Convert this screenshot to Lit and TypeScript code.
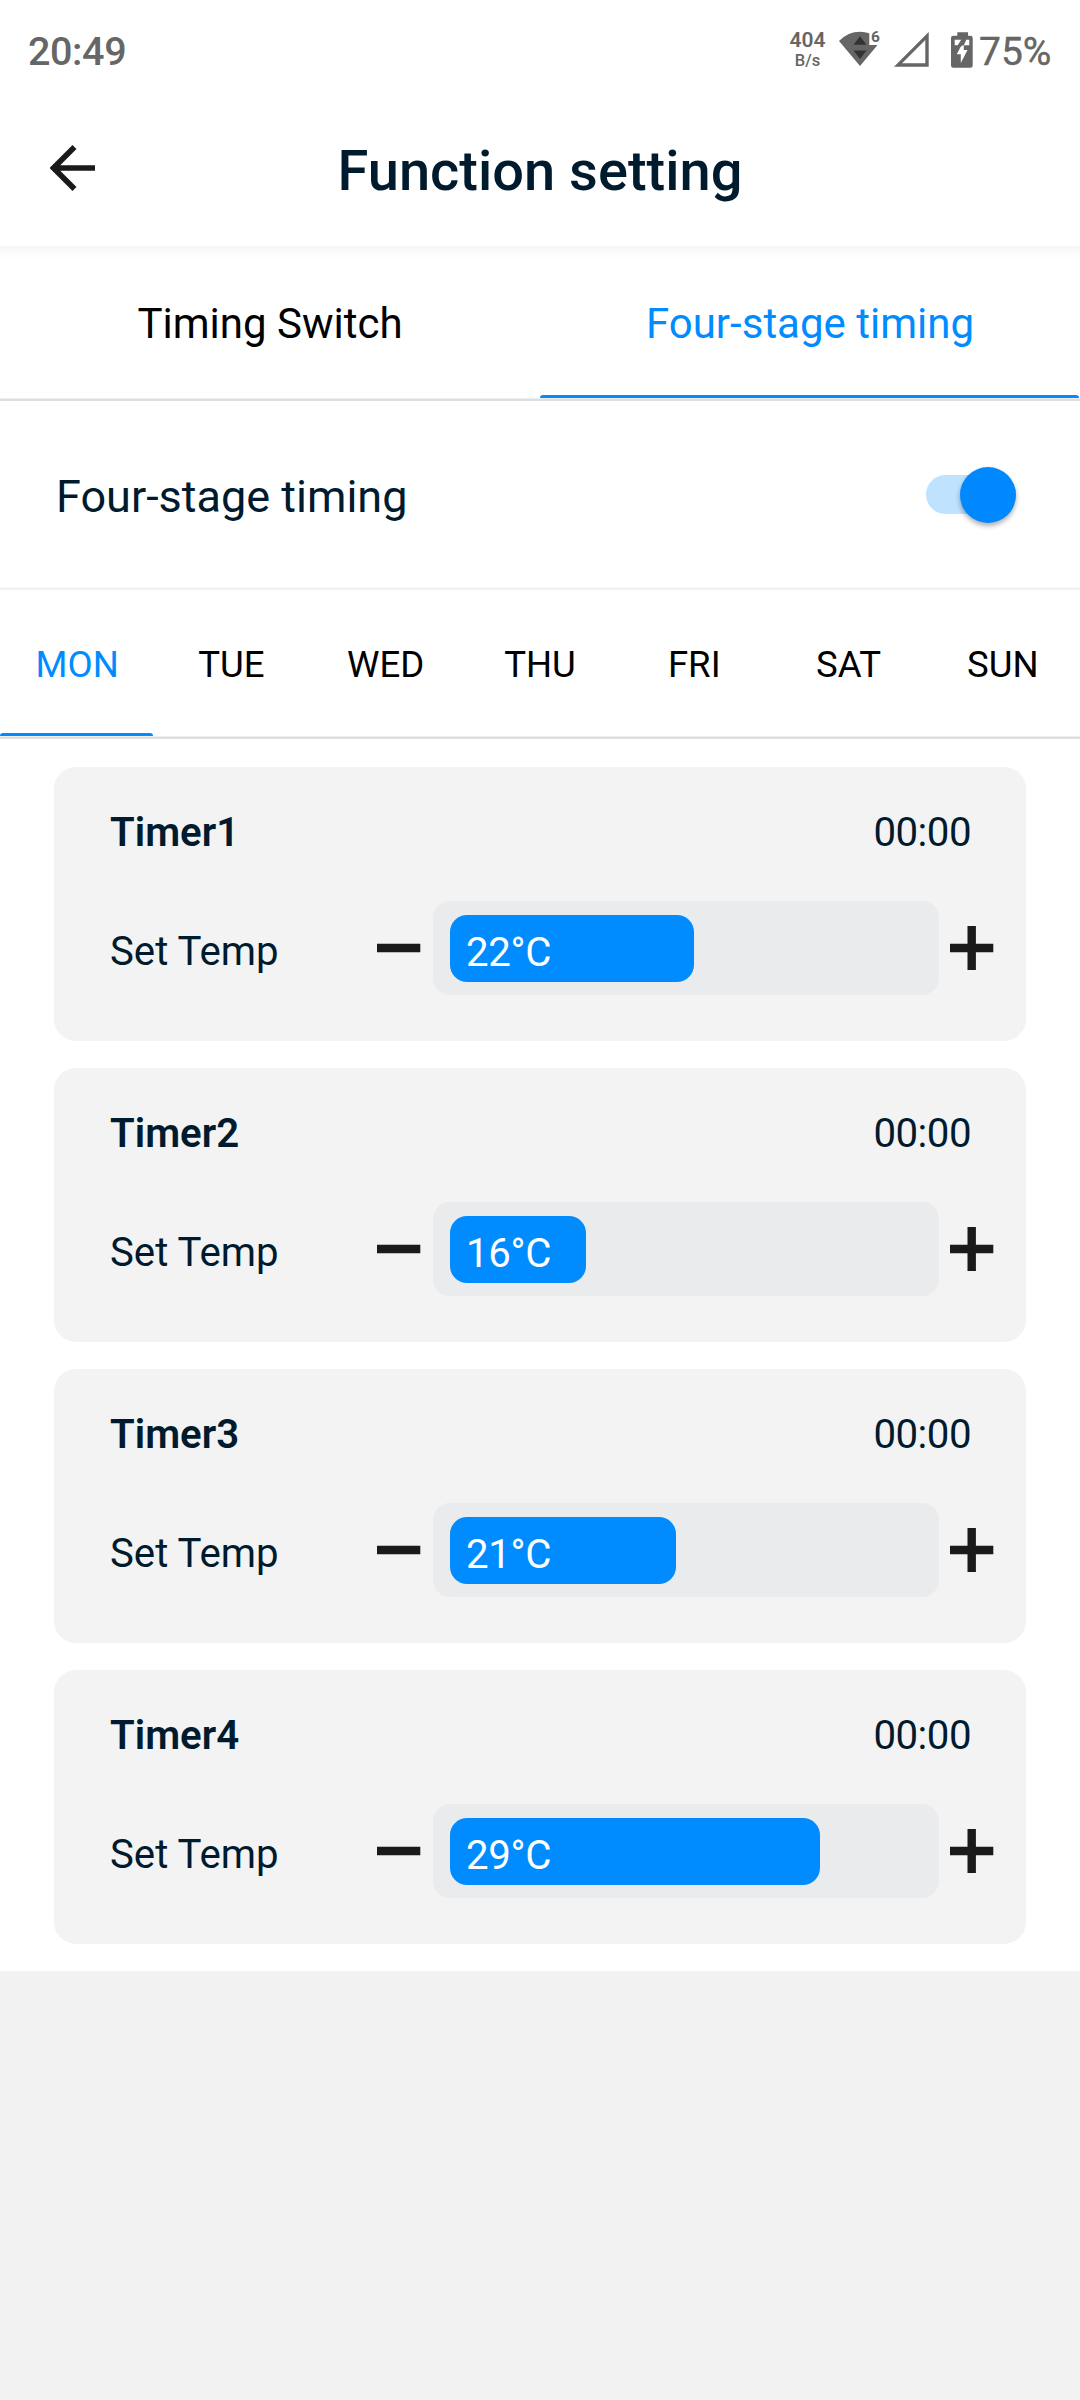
import { LitElement, html, css, svg } from "lit";
import { customElement, property, state } from "lit/decorators.js";
import { classMap } from "lit/directives/class-map.js";

interface Timer {
  name: string;
  time: string;
  temp: number;
}

@customElement("status-bar")
class StatusBar extends LitElement {
  static styles = css`
    :host {
      display: flex;
      justify-content: space-between;
      box-sizing: border-box;
      height: 96px;
      padding: 0 30px 0 28px;
      color: #666;
      font-weight: 500;
    }
    .clock { font-size: 39.5px; line-height: 78px; padding-top: 13px; letter-spacing: -0.4px; }
    .right { display: flex; }
    .rate { display: flex; flex-direction: column; align-items: center; width: 35px; padding-top: 29px; }
    .num { font-size: 21px; line-height: 22px; font-weight: 600; }
    .unit { font-size: 16.5px; line-height: 20px; font-weight: 500; }
    svg { display: block; }
    .icons { width: 156px; height: 60px; padding-top: 15px; margin-right: -2px; }
    .pct { font-size: 39px; line-height: 78px; padding-top: 13px; width: 71px; font-weight: 400; -webkit-text-stroke: 0.4px #666; }
    .six { font-size: 15.5px; font-weight: 700; fill: #666; }
  `;
  render() {
    return html`
      <div class="clock">20:49</div>
      <div class="right">
        <div class="rate"><span class="num">404</span><span class="unit">B/s</span></div>
        <svg class="icons" width="156" height="60" viewBox="825 15 156 60">
          ${svg`
          <path fill="#666" d="M839 41Q848 31.7 860 31.7Q865 31.7 869.3 33.3V45H877.5L860 66Z"/>
          <path fill="#333" d="M853.5 44.8L860 36.3L866.5 44.8ZM853.5 50.5H866.5L860 59Z"/>
          <text class="six" x="871" y="42.3">6</text>
          <path fill="#666" fill-rule="evenodd" d="M894 66.7L928.7 32V66.7ZM902 63.3H925.3V40Z"/>
          <path fill="#666" d="M957.3 32.3H968V35.7H970.5Q972.7 35.7 972.7 38V65.5Q972.7 67.7 970.5 67.7H953.2Q951 67.7 951 65.5V38Q951 35.7 953.2 35.7H957.3Z"/>
          <path fill="#fff" d="M954.7 39.7H961.2L957.7 45.3H954.7ZM965.8 39.7H969.3V45.3H963.8L966 40.5Z"/>
          <path fill="#fff" d="M962.8 45.3H963.8V50H967.5L960.8 63V54.3H956.8L960.5 47Z"/>
          `}
        </svg>
        <div class="pct">75%</div>
      </div>
    `;
  }
}

@customElement("tab-strip")
class TabStrip extends LitElement {
  @property({ attribute: false }) items: string[] = [];
  @property({ type: Number }) selected = 0;
  static styles = css`
    :host { display: flex; box-sizing: border-box; border-bottom: 2px solid #dedede; }
    .tab {
      flex: 1 1 0;
      display: flex;
      flex-direction: column;
      color: #000;
      border-bottom: 1px solid #eee;
    }
    .label { flex: 1; display: flex; align-items: center; justify-content: center; padding-top: 5px; white-space: nowrap; }
    .bar { height: 3px; margin-right: 1.5px; border-radius: 3px 3px 0 0; }
    .on { color: #008cff; }
    .on .bar { background: #008cff; }
  `;
  render() {
    return this.items.map(
      (t, i) => html`<div class=${classMap({ tab: true, on: i === this.selected })}>
        <span class="label">${t}</span><span class="bar"></span>
      </div>`
    );
  }
}

@customElement("timer-card")
class TimerCard extends LitElement {
  @property({ attribute: false }) timer!: Timer;
  static styles = css`
    :host {
      display: block;
      box-sizing: border-box;
      height: 274px;
      padding: 36px 32px 0 56px;
      border-radius: 22px;
      background: #f3f3f3;
      color: #001a2e;
      font-size: 40.2px;
    }
    .head { display: flex; justify-content: space-between; line-height: 60px; padding-right: 23px; }
    .name { font-weight: 600; }
    .time { letter-spacing: -0.5px; }
    .ctl { display: flex; align-items: center; height: 94px; margin-top: 38px; }
    .lbl { width: 267px; line-height: 60px; padding-top: 8px; }
    svg { display: block; width: 44px; height: 44px; flex: none; }
    .track {
      box-sizing: border-box;
      width: 506px;
      height: 94px;
      margin: 0 11px 0 12px;
      padding: 14px 17px 13px;
      border-radius: 17px;
      background: #eaebed;
    }
    .fill {
      box-sizing: border-box;
      height: 67px;
      padding: 4px 0 0 16px;
      border-radius: 17px;
      background: #008cff;
      color: #fff;
      line-height: 68px;
      letter-spacing: -0.3px;
    }
  `;
  render() {
    const { name, time, temp } = this.timer;
    return html`
      <div class="head"><span class="name">${name}</span><span class="time">${time}</span></div>
      <div class="ctl">
        <span class="lbl">Set Temp</span>
        <svg viewBox="0 0 44 44"><path d="M0 22H43.3" stroke="#1a1a1a" stroke-width="8.4"/></svg>
        <div class="track"><div class="fill" style="width:${244 + (temp - 22) * 18}px">${temp}°C</div></div>
        <svg viewBox="0 0 44 44"><path d="M0 22H43.3M21.7 0V44" stroke="#1a1a1a" stroke-width="8.4"/></svg>
      </div>
    `;
  }
}

@customElement("app-root")
class AppRoot extends LitElement {
  @state() private timers: Timer[] = [
    { name: "Timer1", time: "00:00", temp: 22 },
    { name: "Timer2", time: "00:00", temp: 16 },
    { name: "Timer3", time: "00:00", temp: 21 },
    { name: "Timer4", time: "00:00", temp: 29 },
  ];
  static styles = css`
    :host {
      display: block;
      width: 1080px;
      height: 2400px;
      background: #f2f2f2;
      font-family: Roboto, "Liberation Sans", sans-serif;
    }
    .sheet { background: #fff; height: 1971px; }
    .bar { display: grid; grid-template-columns: 120px 1fr 120px; align-items: center; height: 150px; }
    .bar svg { margin-left: 50px; margin-top: -7px; }
    .title { margin: 0; text-align: center; font-size: 56px; font-weight: 500; line-height: 150px; color: #001a2e; }
    .main { height: 155px; font-size: 42px; background: linear-gradient(#f7f7f7, #fcfcfc 7px, #fff 14px); }
    .row {
      display: flex;
      align-items: center;
      justify-content: space-between;
      box-sizing: border-box;
      height: 189px;
      padding: 0 64px 0 56px;
      border-bottom: 2px solid #f2f2f2;
      box-shadow: inset 0 -1px #f9f9f9;
      color: #001a2e;
      font-size: 45px;
    }
    .row span { padding-top: 3px; }
    .switch { display: flex; align-items: center; justify-content: flex-end; width: 90px; height: 39px; border-radius: 20px; background: #bfe2ff; }
    .knob { width: 56px; height: 56px; border-radius: 50%; background: #0088ff; box-shadow: 0 3px 5px rgba(0, 0, 0, 0.32); }
    .days { height: 149px; font-size: 36.6px; }
    .cards { display: flex; flex-direction: column; gap: 27px; padding: 28px 54px 0; }
  `;
  render() {
    return html`
      <div class="sheet">
        <status-bar></status-bar>
        <header class="bar">
          <svg width="46" height="46" viewBox="0 0 46 46">
            <path d="M45 23H4M24.500 2L3.500 23L24.500 44" fill="none" stroke="#1a1a1a" stroke-width="5.600"/>
          </svg>
          <h1 class="title">Function setting</h1>
        </header>
        <tab-strip class="main" .items=${["Timing Switch", "Four-stage timing"]} selected="1"></tab-strip>
        <div class="row">
          <span>Four-stage timing</span>
          <div class="switch"><div class="knob"></div></div>
        </div>
        <tab-strip class="days" .items=${["MON", "TUE", "WED", "THU", "FRI", "SAT", "SUN"]} selected="0"></tab-strip>
        <div class="cards">${this.timers.map((t) => html`<timer-card .timer=${t}></timer-card>`)}</div>
      </div>
    `;
  }
}
